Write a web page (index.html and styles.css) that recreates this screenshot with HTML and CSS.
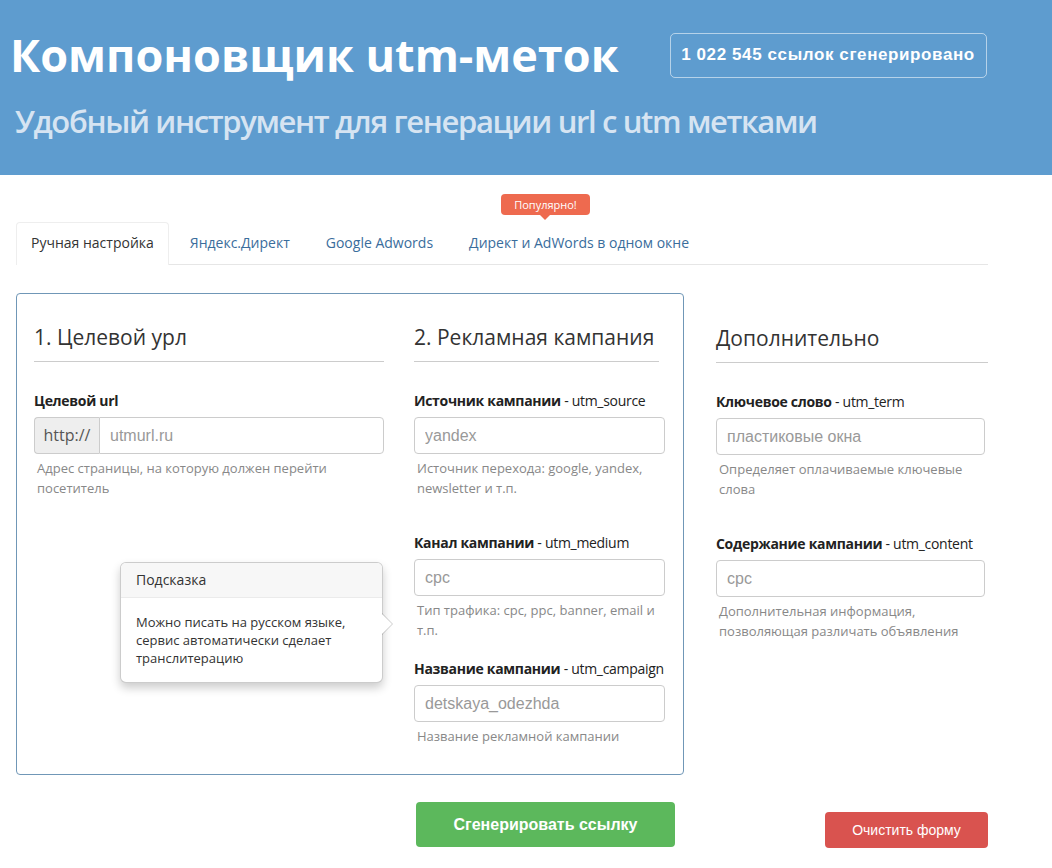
FILE: index.html
```html
<!DOCTYPE html>
<html lang="ru">
<head>
    <meta charset="UTF-8">
    <meta name="viewport" content="width=device-width, initial-scale=1.0">
    <title>Компоновщик utm-меток</title>
    <link rel="stylesheet" href="styles.css">
</head>
<body>
    <header class="header">
        <div class="header-top">
            <h1 class="site-title">Компоновщик utm-меток</h1>
            <div class="counter">1 022 545 ссылок сгенерировано</div>
        </div>
        <p class="site-lead">Удобный инструмент для генерации url с utm метками</p>
    </header>

    <div class="main">
        <!-- tabs -->
        <nav class="tabs">
            <a class="tab active" href="#">Ручная настройка</a>
            <a class="tab" href="#">Яндекс.Директ</a>
            <a class="tab" href="#">Google Adwords</a>
            <a class="tab" href="#">Директ и AdWords в одном окне</a>
            <span class="badge">Популярно!</span>
        </nav>

        <form class="workspace">
            <div class="box">
                <div class="col">
                    <h3 class="section-title">1. Целевой урл</h3>
                    <div class="group">
                        <label class="field-label" for="url"><b>Целевой url</b></label>
                        <div class="input-group">
                            <span class="addon">http://</span>
                            <input type="text" id="url" class="input-field" placeholder="utmurl.ru">
                        </div>
                        <p class="help">Адрес страницы, на которую должен перейти посетитель</p>
                    </div>
                </div>

                <div class="col col-campaign">
                    <h3 class="section-title">2. Рекламная кампания</h3>
                    <div class="group">
                        <label class="field-label" for="source"><b>Источник кампании</b> - utm_source</label>
                        <input type="text" id="source" class="input-field" placeholder="yandex">
                        <p class="help">Источник перехода: google, yandex, newsletter и т.п.</p>
                    </div>
                    <div class="group group-wide">
                        <label class="field-label" for="medium"><b>Канал кампании</b> - utm_medium</label>
                        <input type="text" id="medium" class="input-field" placeholder="cpc">
                        <p class="help">Тип трафика: cpc, ppc, banner, email и т.п.</p>
                    </div>
                    <div class="group group-tight">
                        <label class="field-label" for="campaign"><b>Название кампании</b> - utm_campaign</label>
                        <input type="text" id="campaign" class="input-field" placeholder="detskaya_odezhda">
                        <p class="help">Название рекламной кампании</p>
                    </div>
                </div>

                <div class="popover">
                    <div class="popover-title">Подсказка</div>
                    <div class="popover-content">Можно писать на русском языке, сервис автоматически сделает транслитерацию</div>
                </div>
            </div>

            <div class="col col-extra">
                <h3 class="section-title">Дополнительно</h3>
                <div class="group">
                    <label class="field-label" for="term"><b>Ключевое слово</b> - utm_term</label>
                    <input type="text" id="term" class="input-field" placeholder="пластиковые окна">
                    <p class="help">Определяет оплачиваемые ключевые слова</p>
                </div>
                <div class="group group-wide">
                    <label class="field-label" for="content"><b>Содержание кампании</b> - utm_content</label>
                    <input type="text" id="content" class="input-field" placeholder="cpc">
                    <p class="help">Дополнительная информация, позволяющая различать объявления</p>
                </div>
            </div>
        </form>

        <div class="actions">
            <button type="button" class="btn btn-generate">Сгенерировать ссылку</button>
            <button type="button" class="btn btn-clear">Очистить форму</button>
        </div>
    </div>
</body>
</html>
```

FILE: styles.css
```css
body {
    margin: 0;
    font-family: "Open Sans", sans-serif;
    color: #333;
    background-color: #fff;
}

/* header */
.header {
    height: 175px;
    box-sizing: border-box;
    padding: 28px 10px 0;
    background-color: #5e9ccf;
}

.header-top {
    display: flex;
    align-items: center;
    gap: 51px;
}

.site-title {
    margin: 0;
    font-size: 45px;
    line-height: 54px;
    font-weight: 700;
    color: #fff;
}

.counter {
    width: 317px;
    height: 45px;
    box-sizing: border-box;
    border: 1px solid rgba(255, 255, 255, 0.55);
    border-radius: 5px;
    display: flex;
    align-items: center;
    justify-content: center;
    font-family: "Liberation Sans", Arial, sans-serif;
    font-size: 17px;
    font-weight: 700;
    letter-spacing: 0.6px;
    color: #fff;
}

.site-lead {
    margin: 19px 0 0 5px;
    font-size: 31px;
    line-height: 40px;
    font-weight: 600;
    color: #d6e4f2;
    letter-spacing: -1.35px;
}

.main {
    width: 972px;
    margin-left: 16px;
}

/* tabs */
.tabs {
    position: relative;
    display: flex;
    gap: 6px;
    margin-top: 47px;
    border-bottom: 1px solid #e6e6e6;
}

.tab {
    padding: 9px 14px 12px;
    margin-bottom: -1px;
    font-size: 14px;
    line-height: 21px;
    color: #3a6d9c;
    text-decoration: none;
    border: 1px solid transparent;
    border-bottom: none;
    border-radius: 4px 4px 0 0;
}

.tab.active {
    color: #333;
    background-color: #fff;
    border-color: #eee;
}

.badge {
    position: absolute;
    left: 485px;
    top: -28px;
    width: 89px;
    height: 21px;
    box-sizing: border-box;
    border-radius: 4px;
    background-color: #ee6a4f;
    color: #fff;
    font-size: 11px;
    line-height: 21px;
    text-align: center;
}

.badge::after {
    content: "";
    position: absolute;
    left: 39px;
    bottom: -5px;
    border-left: 5px solid transparent;
    border-right: 5px solid transparent;
    border-top: 5px solid #ee6a4f;
}

/* form */
.workspace {
    display: grid;
    grid-template-columns: 668px 272px;
    column-gap: 32px;
    margin-top: 28px;
}

.box {
    position: relative;
    display: grid;
    grid-template-columns: 350px 251px;
    column-gap: 30px;
    padding: 28px 18px 28px 17px;
    border: 1px solid #7097b7;
    border-radius: 4px;
}

.col-extra {
    padding-top: 30px;
}

.col-extra .input-field {
    width: 269px;
}

.section-title {
    margin: 0;
    padding-bottom: 9px;
    border-bottom: 1px solid #ccc;
    font-size: 21px;
    line-height: 30px;
    font-weight: 400;
    color: #333;
}

.col-campaign .section-title {
    margin-right: 6px;
}

.group {
    margin-top: 29px;
}

.group-wide {
    margin-top: 35px;
}

.group-tight {
    margin-top: 19px;
}

.field-label {
    display: block;
    margin-bottom: 6px;
    font-size: 14px;
    line-height: 20px;
    letter-spacing: -0.3px;
    white-space: nowrap;
    color: #222;
}

.field-label b {
    font-weight: 700;
}

.input-field {
    display: block;
    width: 100%;
    height: 37px;
    box-sizing: border-box;
    padding: 0 10px;
    border: 1px solid #ccc;
    border-radius: 4px;
    font-family: "Liberation Sans", Arial, sans-serif;
    font-size: 16px;
    color: #555;
    background: #fff;
}

.input-field::placeholder {
    color: #999;
}

.input-group {
    display: flex;
}

.addon {
    flex-shrink: 0;
    width: 65px;
    height: 37px;
    box-sizing: border-box;
    border: 1px solid #ccc;
    border-right: none;
    border-radius: 4px 0 0 4px;
    background-color: #eee;
    font-size: 16px;
    line-height: 35px;
    color: #555;
    text-align: center;
}

.input-group .input-field {
    flex: 1;
    width: auto;
    min-width: 0;
    border-radius: 0 4px 4px 0;
}

.help {
    margin: 4px 0 0;
    padding-left: 3px;
    font-size: 13px;
    line-height: 20px;
    color: #888;
}

/* popover */
.popover {
    position: absolute;
    left: 103px;
    top: 268px;
    width: 263px;
    box-sizing: border-box;
    background-color: #fff;
    border: 1px solid rgba(0, 0, 0, 0.2);
    border-radius: 6px;
    box-shadow: 0 5px 10px rgba(0, 0, 0, 0.2);
}

.popover::before,
.popover::after {
    content: "";
    position: absolute;
    top: 50px;
    border-top: 11px solid transparent;
    border-bottom: 11px solid transparent;
}

.popover::before {
    right: -11px;
    border-left: 11px solid rgba(0, 0, 0, 0.2);
}

.popover::after {
    right: -10px;
    border-left: 11px solid #fff;
}

.popover-title {
    padding: 8px 15px;
    font-size: 14px;
    line-height: 18px;
    background-color: #f7f7f7;
    border-bottom: 1px solid #ebebeb;
    border-radius: 5px 5px 0 0;
}

.popover-content {
    padding: 15px;
    font-size: 13px;
    line-height: 18px;
    color: #333;
}

/* buttons */
.actions {
    display: flex;
    align-items: flex-start;
    margin-top: 27px;
}

.btn {
    border: none;
    border-radius: 4px;
    color: #fff;
    font-family: "Liberation Sans", Arial, sans-serif;
    cursor: pointer;
}

.btn-generate {
    width: 259px;
    height: 45px;
    margin-left: 400px;
    background-color: #5cb85c;
    font-size: 16px;
    font-weight: 700;
}

.btn-clear {
    width: 163px;
    height: 36px;
    margin-top: 10px;
    margin-left: auto;
    background-color: #d9534f;
    font-size: 14px;
}
```
